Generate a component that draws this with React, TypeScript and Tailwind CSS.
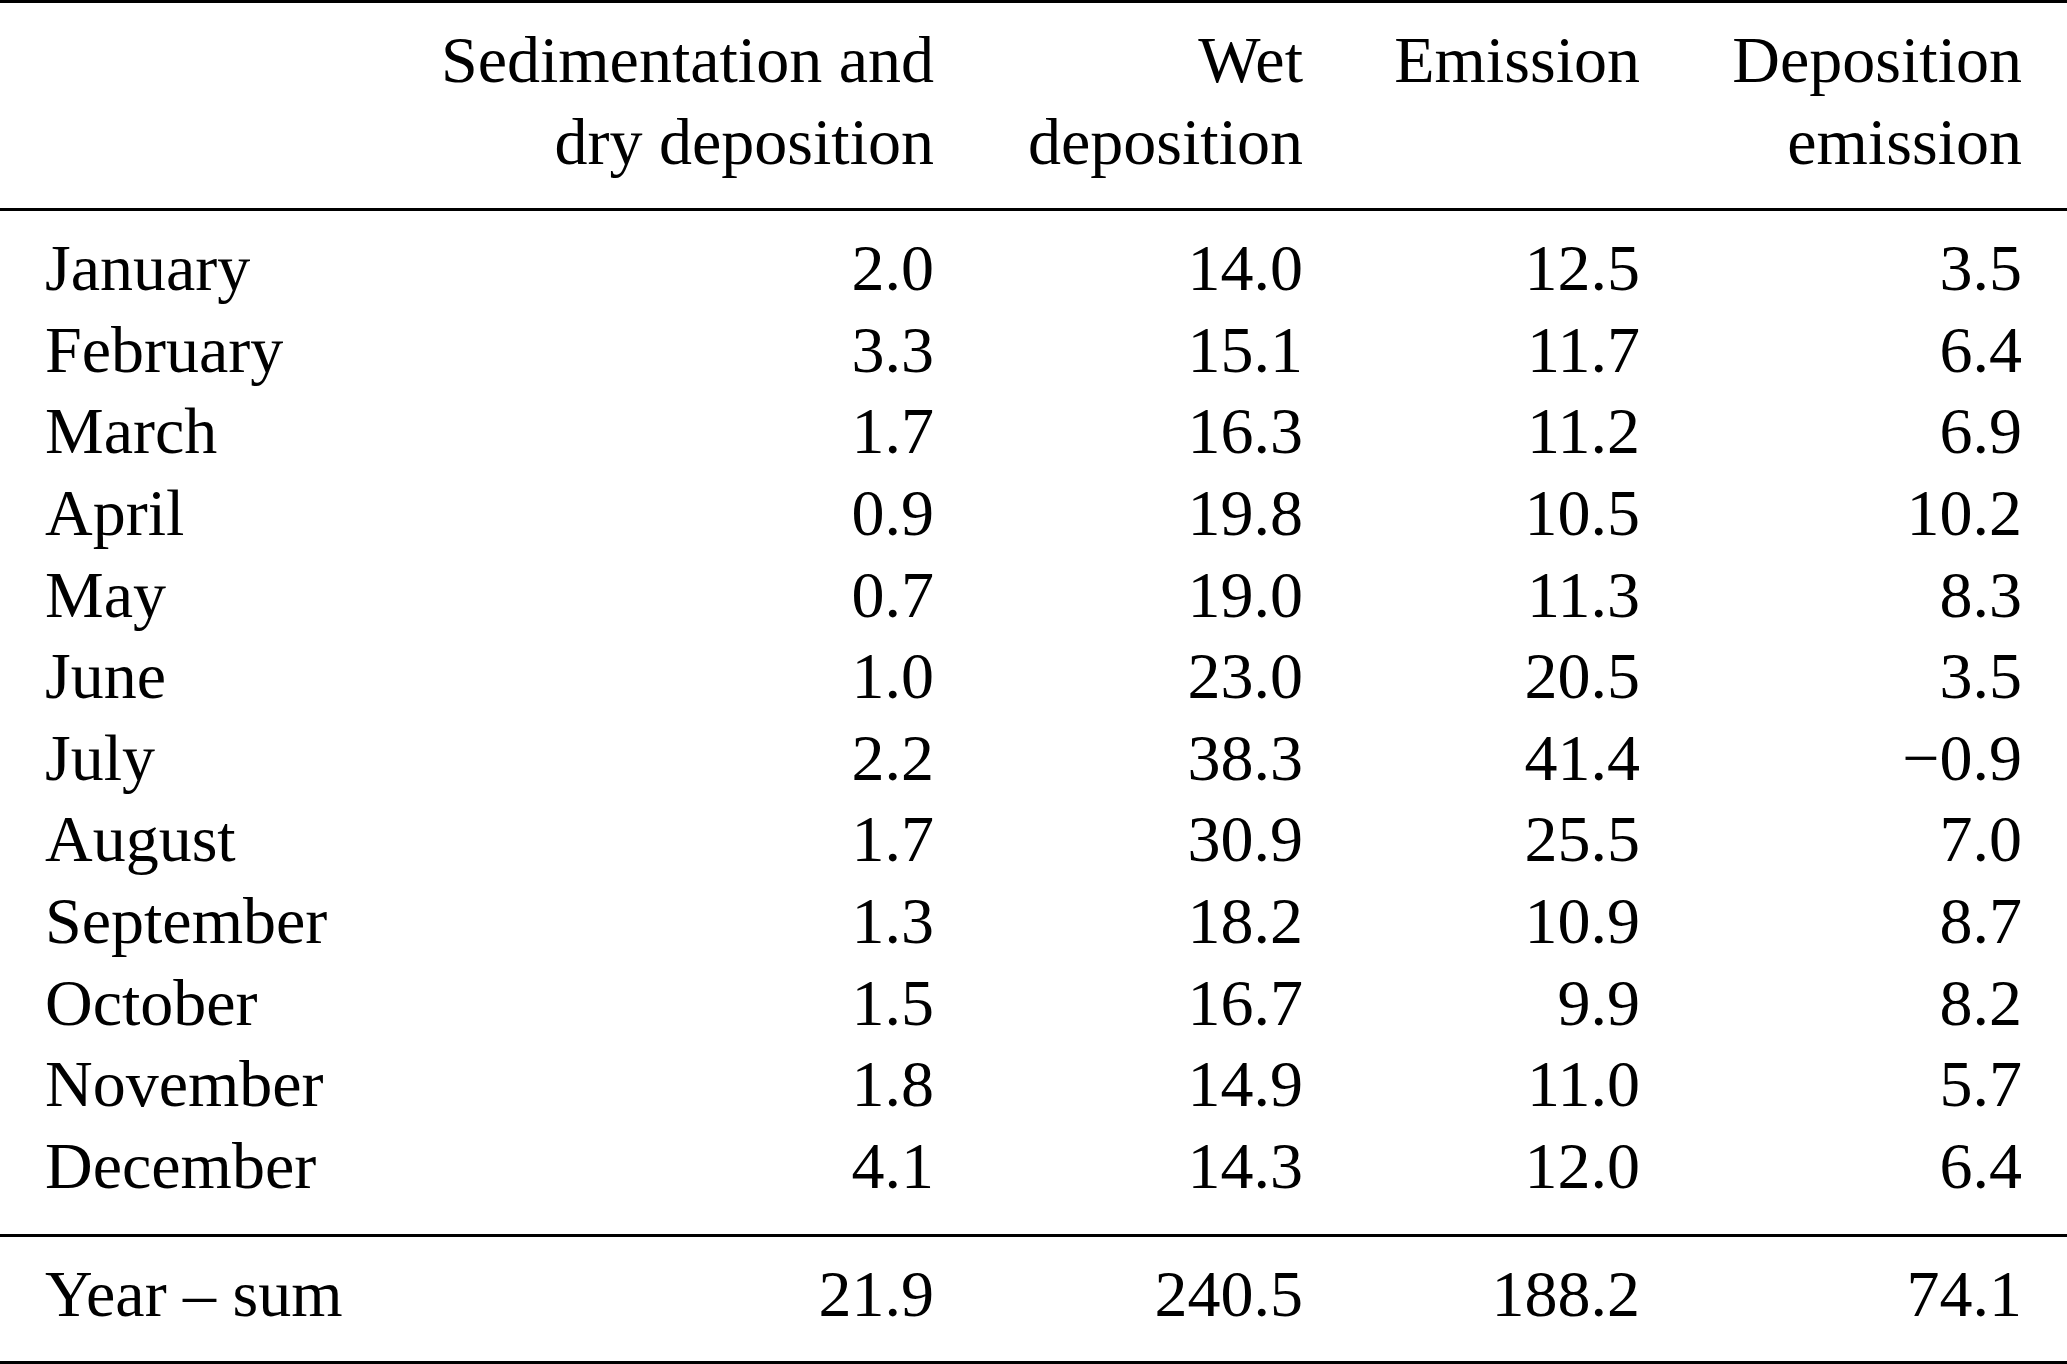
// Monthly deposition / emission table (booktabs-like rules, right-aligned numeric columns).

const ROWS: [string, string, string, string, string][] = [
  ['January', '2.0', '14.0', '12.5', '3.5'],
  ['February', '3.3', '15.1', '11.7', '6.4'],
  ['March', '1.7', '16.3', '11.2', '6.9'],
  ['April', '0.9', '19.8', '10.5', '10.2'],
  ['May', '0.7', '19.0', '11.3', '8.3'],
  ['June', '1.0', '23.0', '20.5', '3.5'],
  ['July', '2.2', '38.3', '41.4', '\u22120.9'],
  ['August', '1.7', '30.9', '25.5', '7.0'],
  ['September', '1.3', '18.2', '10.9', '8.7'],
  ['October', '1.5', '16.7', '9.9', '8.2'],
  ['November', '1.8', '14.9', '11.0', '5.7'],
  ['December', '4.1', '14.3', '12.0', '6.4'],
]

const TOTAL: [string, string, string, string, string] = ['Year – sum', '21.9', '240.5', '188.2', '74.1']

// column grid shared by every section
const GRID = 'grid grid-cols-[393px_496px_369px_337px_382px] pl-[45px] pr-[45px]'

function Row({ cells }: { cells: string[] }) {
  return (
    <div className={GRID}>
      <div className="text-left whitespace-nowrap">{cells[0]}</div>
      {cells.slice(1).map((c, i) => (
        <div key={i} className="text-right whitespace-nowrap">
          {c}
        </div>
      ))}
    </div>
  )
}

export default function App() {
  return (
    <div className="w-[2067px] h-[1364px] bg-white text-black font-['Liberation_Serif','Times_New_Roman',serif] text-[66px] leading-[81.6px] overflow-hidden">
      {/* header */}
      <div className={`${GRID} border-t-[3px] border-b-[3px] border-black pt-[16px] pb-[26px]`}>
        <div />
        <div className="text-right whitespace-nowrap">
          Sedimentation and
          <br />
          dry deposition
        </div>
        <div className="text-right whitespace-nowrap">
          Wet
          <br />
          deposition
        </div>
        <div className="text-right whitespace-nowrap">Emission</div>
        <div className="text-right whitespace-nowrap">
          Deposition
          <br />
          emission
        </div>
      </div>

      {/* months */}
      <div className="border-b-[3px] border-black pt-[16px] pb-[28px]">
        {ROWS.map((r) => (
          <Row key={r[0]} cells={r} />
        ))}
      </div>

      {/* yearly total */}
      <div className="border-b-[3px] border-black pt-[16px] pb-[26px]">
        <Row cells={TOTAL} />
      </div>
    </div>
  )
}
